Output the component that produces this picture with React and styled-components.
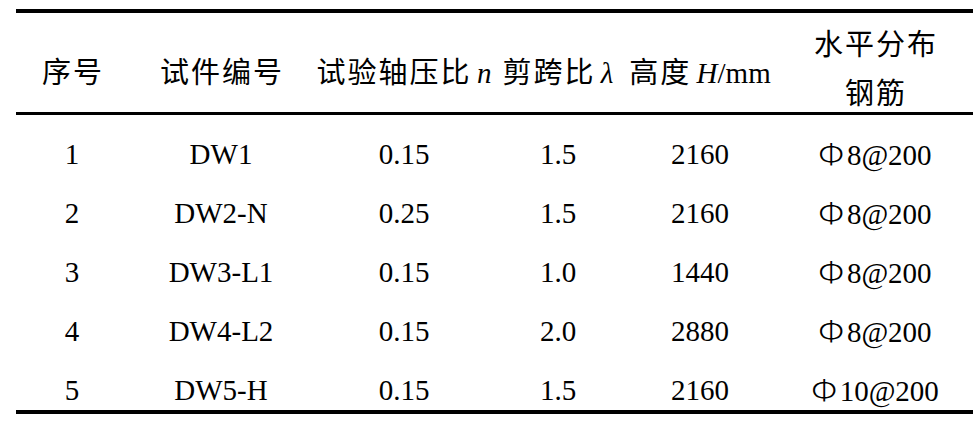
import React from "react";
import styled, { createGlobalStyle } from "styled-components";

const Global = createGlobalStyle`
  html, body { margin: 0; padding: 0; background: #fff; }
  body { font-family: "Liberation Serif", "Noto Sans CJK SC", serif; color: #000; }
`;

const Page = styled.div`
  width: 980px;
  height: 426px;
  padding: 9px 0 0 16px;
  box-sizing: border-box;
`;

const Table = styled.div`
  width: 957px;
  border-top: 4px solid #000;
  border-bottom: 4px solid #000;
`;

const cols = "112px 186px 180px 128px 156px 194px";

const HeadRow = styled.div`
  display: grid;
  grid-template-columns: ${cols};
  height: 102px;
  box-sizing: border-box;
  padding-top: 12px;
  align-items: center;
  border-bottom: 3px solid #000;
`;

const Row = styled.div`
  display: grid;
  grid-template-columns: ${cols};
  height: 59px;
  box-sizing: border-box;
  padding-top: 18px;
  align-items: center;
`;

const Cell = styled.div`
  font-family: "Liberation Serif", "Noto Sans CJK SC", serif;
  font-size: 29px;
  line-height: ${(p) => (p.$lh ? p.$lh : "34px")};
  text-align: center;
  white-space: nowrap;
  margin-top: ${(p) => p.$shift || 0}px;
`;

const Han = styled.span`
  font-family: "Noto Sans CJK SC", sans-serif;
  letter-spacing: 2px;
  margin-right: -2px;
`;

const Var = styled.i`
  font-family: "Liberation Serif", serif;
  font-style: italic;
`;

const Phi = styled.span`
  font-family: "Noto Sans CJK SC", sans-serif;
  font-weight: 300;
  display: inline-block;
  transform: scaleX(1.15);
  margin: 0 4px 0 2px;
`;

const rows = [
  ["1", "DW1", "0.15", "1.5", "2160", "8@200"],
  ["2", "DW2-N", "0.25", "1.5", "2160", "8@200"],
  ["3", "DW3-L1", "0.15", "1.0", "1440", "8@200"],
  ["4", "DW4-L2", "0.15", "2.0", "2880", "8@200"],
  ["5", "DW5-H", "0.15", "1.5", "2160", "10@200"],
];

export default function App() {
  return (
    <Page>
      <Global />
      <Table>
        <HeadRow>
          <Cell><Han>序号</Han></Cell>
          <Cell><Han>试件编号</Han></Cell>
          <Cell><Han>试验轴压比</Han> <Var>n</Var></Cell>
          <Cell><Han>剪跨比</Han> <Var>λ</Var></Cell>
          <Cell><Han>高度</Han> <Var>H</Var>/mm</Cell>
          <Cell $lh="46px" $shift={-6}><Han>水平分布</Han><br /><Han>钢筋</Han></Cell>
        </HeadRow>
        {rows.map((r) => (
          <Row key={r[0]}>
            <Cell>{r[0]}</Cell>
            <Cell>{r[1]}</Cell>
            <Cell>{r[2]}</Cell>
            <Cell>{r[3]}</Cell>
            <Cell>{r[4]}</Cell>
            <Cell><Phi>Φ</Phi>{r[5]}</Cell>
          </Row>
        ))}
      </Table>
    </Page>
  );
}
